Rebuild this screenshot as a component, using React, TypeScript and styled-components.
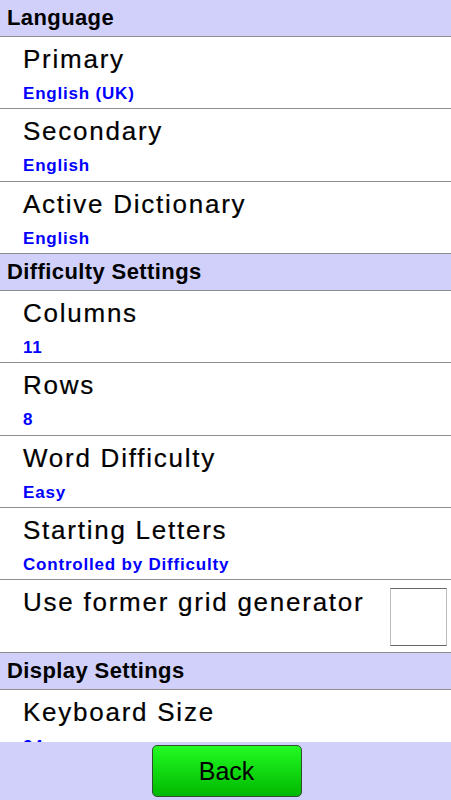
import styled, { createGlobalStyle } from "styled-components";

const GlobalStyle = createGlobalStyle`
  html, body {
    margin: 0;
    padding: 0;
    background: #ffffff;
    font-family: "Liberation Sans", Arial, sans-serif;
  }
  * {
    box-sizing: border-box;
  }
`;

const Screen = styled.div`
  display: flex;
  flex-direction: column;
  width: 100%;
  height: 100vh;
  overflow: hidden;
`;

const List = styled.div`
  flex: 1;
  overflow: hidden;
`;

const Header = styled.div`
  height: 36.8px;
  padding-left: 7px;
  display: flex;
  align-items: center;
  background: #d0d0fa;
  border-bottom: 1px solid #8e8e8e;
  color: #000;
  font-size: 22px;
  font-weight: bold;
  letter-spacing: 0.4px;
`;

const Row = styled.div`
  display: flex;
  align-items: flex-start;
  justify-content: space-between;
  height: 72.4px;
  padding: 7px 4px 0 23px;
  border-bottom: 1px solid #8e8e8e;
  background: #fff;
`;

const Texts = styled.div`
  display: flex;
  flex-direction: column;
`;

const Title = styled.div`
  font-size: 26px;
  line-height: 30px;
  letter-spacing: 1.75px;
  color: #000;
  -webkit-text-stroke: 0.2px #000;
`;

const Sub = styled.div`
  margin-top: 9px;
  font-size: 17px;
  line-height: 22px;
  font-weight: bold;
  letter-spacing: 0.8px;
  color: #0000ff;
`;

const CheckBox = styled.div`
  width: 57px;
  height: 58px;
  margin-top: 1px;
  background: #fff;
  border: 1px solid;
  border-color: #666 #bbb #666 #bbb;
`;

const BottomBar = styled.div`
  flex: 0 0 58px;
  display: flex;
  align-items: center;
  justify-content: center;
  background: #d0d0fa;
`;

const BackButton = styled.button`
  width: 150px;
  height: 52px;
  margin-left: 2px;
  border: 1px solid #2f4f2f;
  border-radius: 5px;
  background: linear-gradient(#22fb22, #00b800);
  color: #000;
  font-family: "Liberation Sans", Arial, sans-serif;
  font-size: 25px;
  padding: 0;
`;

type Item = { title: string; value?: string; check?: boolean };
type Section = { name: string; items: Item[] };

const sections: Section[] = [
  {
    name: "Language",
    items: [
      { title: "Primary", value: "English (UK)" },
      { title: "Secondary", value: "English" },
      { title: "Active Dictionary", value: "English" },
    ],
  },
  {
    name: "Difficulty Settings",
    items: [
      { title: "Columns", value: "11" },
      { title: "Rows", value: "8" },
      { title: "Word Difficulty", value: "Easy" },
      { title: "Starting Letters", value: "Controlled by Difficulty" },
      { title: "Use former grid generator", check: true },
    ],
  },
  {
    name: "Display Settings",
    items: [{ title: "Keyboard Size", value: "24" }],
  },
];

function SettingRow({ item }: { item: Item }) {
  return (
    <Row>
      <Texts>
        <Title>{item.title}</Title>
        {item.value && <Sub>{item.value}</Sub>}
      </Texts>
      {item.check && <CheckBox />}
    </Row>
  );
}

function App() {
  return (
    <>
      <GlobalStyle />
      <Screen>
        <List>
          {sections.map((s) => (
            <div key={s.name}>
              <Header>{s.name}</Header>
              {s.items.map((it) => (
                <SettingRow key={it.title} item={it} />
              ))}
            </div>
          ))}
        </List>
        <BottomBar>
          <BackButton>Back</BackButton>
        </BottomBar>
      </Screen>
    </>
  );
}

export default App;
